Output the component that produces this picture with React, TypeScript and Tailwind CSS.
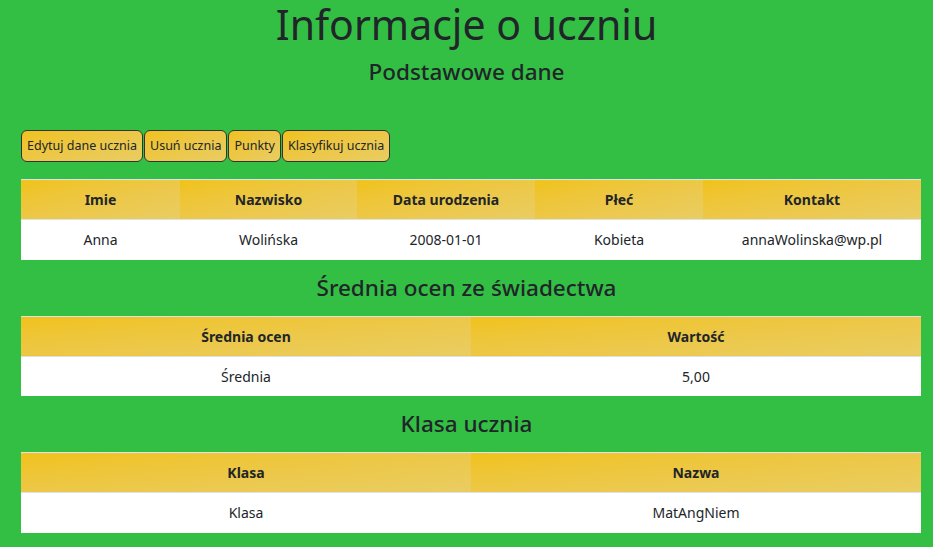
import React from "react";

const font = { fontFamily: '"Noto Sans", "Open Sans", sans-serif' };

const buttons = ["Edytuj dane ucznia", "Usuń ucznia", "Punkty", "Klasyfikuj ucznia"];

function Cell({ children, head, w }: { children: React.ReactNode; head?: boolean; w?: string }) {
  if (head)
    return (
      <th
        className={`h-[40px] border-t border-[#dee2e6] bg-linear-to-br from-[#f0c217] to-[#e9cd62] text-center text-[14px] font-bold text-[#212529] ${w ?? ""}`}
      >
        {children}
      </th>
    );
  return (
    <td className={`h-[40px] border-t border-[#dee2e6] bg-white text-center text-[14px] text-[#212529] ${w ?? ""}`}>
      {children}
    </td>
  );
}

function DataTable({ heads, row, widths }: { heads: string[]; row: string[]; widths: string[] }) {
  return (
    <table className="mx-[21px] w-[900px] table-fixed border-collapse">
      <thead>
        <tr>
          {heads.map((h, i) => (
            <Cell key={h} head w={widths[i]}>
              {h}
            </Cell>
          ))}
        </tr>
      </thead>
      <tbody>
        <tr>
          {row.map((c, i) => (
            <Cell key={i}>{c}</Cell>
          ))}
        </tr>
      </tbody>
    </table>
  );
}

export default function App() {
  return (
    <div className="min-h-[547px] w-full bg-[#33bf44] text-[#212529]" style={font}>
      <h1 className="text-center text-[41px] leading-[48px] font-normal">Informacje o uczniu</h1>
      <h4 className="mt-[9px] text-center text-[22.5px] leading-[30px] font-medium">Podstawowe dane</h4>

      <div className="mt-[43px] flex gap-[1px] px-[21px]">
        {buttons.map((b) => (
          <button
            key={b}
            className="h-[32px] rounded-[6px] border border-[#333] bg-linear-to-br from-[#f0c217] to-[#e9cd62] px-[5px] text-[12.5px] text-[#212529]"
          >
            {b}
          </button>
        ))}
      </div>

      <div className="mt-[17px]">
        <DataTable
          heads={["Imie", "Nazwisko", "Data urodzenia", "Płeć", "Kontakt"]}
          row={["Anna", "Wolińska", "2008-01-01", "Kobieta", "annaWolinska@wp.pl"]}
          widths={["w-[159px]", "w-[177px]", "w-[178px]", "w-[168px]", "w-[218px]"]}
        />
      </div>

      <h4 className="mt-[13px] text-center text-[22.5px] leading-[30px] font-medium">Średnia ocen ze świadectwa</h4>
      <div className="mt-[13px]">
        <DataTable heads={["Średnia ocen", "Wartość"]} row={["Średnia", "5,00"]} widths={["w-1/2", "w-1/2"]} />
      </div>

      <h4 className="mt-[13px] text-center text-[22.5px] leading-[30px] font-medium">Klasa ucznia</h4>
      <div className="mt-[13px]">
        <DataTable heads={["Klasa", "Nazwa"]} row={["Klasa", "MatAngNiem"]} widths={["w-1/2", "w-1/2"]} />
      </div>
    </div>
  );
}
